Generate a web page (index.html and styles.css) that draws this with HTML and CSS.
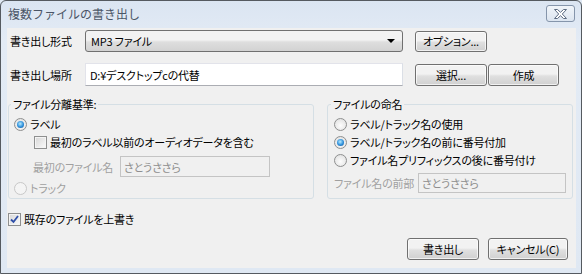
FILE: index.html
```html
<!DOCTYPE html>
<html lang="ja">
<head>
  <meta charset="UTF-8" />
  <title>複数ファイルの書き出し</title>
  <link rel="stylesheet" href="styles.css">
</head>
<body>
  <div class="window">
    <div class="titlebar">
      <span class="title">複数ファイルの書き出し</span>
      <button class="close" type="button">
        <svg width="13" height="10" viewBox="0 0 13 10">
          <path d="M0.5 0.5H3.5L6.5 3.3L9.5 0.5H12.5L8.3 5L12.5 9.5H9.5L6.5 6.7L3.5 9.5H0.5L4.7 5Z" fill="#fff" stroke="#5d6c82" stroke-width="1" stroke-linejoin="round"/>
        </svg>
      </button>
    </div>

    <div class="client">
      <div class="row row-format">
        <label class="field-label">書き出し形式</label>
        <div class="combo">
          <span>MP3 ファイル</span>
          <span class="arrow"></span>
        </div>
        <button class="btn btn-wide" type="button">オプション...</button>
      </div>

      <div class="row row-location">
        <label class="field-label">書き出し場所</label>
        <div class="textbox">D:¥デスクトップcの代替</div>
        <button class="btn btn-wide" type="button">選択...</button>
        <button class="btn btn-create" type="button">作成</button>
      </div>

      <div class="groups">
        <fieldset class="group group-split">
          <legend>ファイル分離基準:</legend>
          <div class="option">
            <span class="radio checked"></span>
            <span>ラベル</span>
          </div>
          <div class="option option-sub">
            <span class="checkbox"></span>
            <span>最初のラベル以前のオーディオデータを含む</span>
          </div>
          <div class="name-row name-row-split">
            <span class="disabled-text name-label">最初のファイル名</span>
            <div class="textbox textbox-disabled textbox-first">さとうささら</div>
          </div>
          <div class="option option-last">
            <span class="radio disabled"></span>
            <span class="disabled-text">トラック</span>
          </div>
        </fieldset>

        <fieldset class="group group-name">
          <legend>ファイルの命名</legend>
          <div class="option">
            <span class="radio"></span>
            <span>ラベル/トラック名の使用</span>
          </div>
          <div class="option option-next">
            <span class="radio checked"></span>
            <span>ラベル/トラック名の前に番号付加</span>
          </div>
          <div class="option option-next">
            <span class="radio"></span>
            <span>ファイル名プリフィックスの後に番号付け</span>
          </div>
          <div class="name-row name-row-prefix">
            <span class="disabled-text name-label-prefix">ファイル名の前部</span>
            <div class="textbox textbox-disabled textbox-prefix">さとうささら</div>
          </div>
        </fieldset>
      </div>

      <div class="option overwrite">
        <span class="checkbox checked">
          <svg width="9" height="9" viewBox="0 0 9 9">
            <path d="M1 4.5L3.5 7L8 1" fill="none" stroke="#2f4fa8" stroke-width="1.8"/>
          </svg>
        </span>
        <span>既存のファイルを上書き</span>
      </div>

      <div class="actions">
        <button class="btn btn-export" type="button">書き出し</button>
        <button class="btn btn-cancel" type="button">キャンセル(C)</button>
      </div>
    </div>
  </div>
</body>
</html>
```

FILE: styles.css
```css
body {
  margin: 0;
  font-family: "Noto Sans CJK JP", "Noto Sans", sans-serif;
  font-size: 11px;
  line-height: 14px;
  letter-spacing: -0.2px;
  font-feature-settings: "palt";
  color: #000;
  background: #dfe8f3;
}
.window {
  width: 582px;
  height: 274px;
  box-sizing: border-box;
  border: 1px solid #555a60;
  border-radius: 6px 6px 0 0;
  background: linear-gradient(#dbe5f2, #e3ebf5 40px, #dfe8f3);
  padding: 0 5px 5px 6px;
}
.titlebar {
  height: 27px;
  display: flex;
  justify-content: space-between;
  align-items: flex-start;
  padding-left: 1px;
}
.title {
  margin-top: 6px;
  color: #4a5566;
  font-size: 12px;
  letter-spacing: 0;
  font-feature-settings: normal;
}
.close {
  margin-top: 4px;
  margin-right: 1px;
  width: 29px;
  height: 17px;
  padding: 0;
  display: flex;
  align-items: center;
  justify-content: center;
  border: 1px solid #8595ab;
  border-radius: 3px;
  background: linear-gradient(#f1f5fa, #dce5f0);
}
.client {
  height: 240px;
  box-sizing: border-box;
  background: #f0f0f0;
  padding: 2px 3px 0 1px;
  white-space: nowrap;
}
.row {
  display: flex;
  align-items: center;
}
.row-format {
  height: 22px;
}
.row-location {
  height: 23px;
  margin-top: 11px;
}
.field-label {
  width: 77px;
  padding-left: 2px;
  box-sizing: border-box;
}
.combo {
  width: 318px;
  height: 22px;
  box-sizing: border-box;
  border: 1px solid #707070;
  border-radius: 3px;
  background: linear-gradient(#f2f2f2 45%, #dedede 55%, #d2d2d2);
  display: flex;
  align-items: center;
  justify-content: space-between;
  padding: 0 7px 0 5px;
  margin-right: 12px;
}
.arrow {
  width: 0;
  height: 0;
  border-left: 4px solid transparent;
  border-right: 4px solid transparent;
  border-top: 4px solid #000;
}
.textbox {
  width: 318px;
  height: 23px;
  box-sizing: border-box;
  border: 1px solid #abadb3;
  border-top-color: #e2e3ea;
  border-left-color: #e2e3ea;
  border-right-color: #dbdfe6;
  background: #fff;
  padding: 0 4px;
  display: flex;
  align-items: center;
  margin-right: 12px;
}
.textbox-disabled {
  background: #f0f0f0;
  border: 1px solid #c4c4c4;
  color: #8d8d8d;
  margin-right: 0;
  padding: 0 3px;
}
.textbox-first {
  width: 150px;
  height: 21px;
}
.textbox-prefix {
  width: 148px;
  height: 20px;
}
.btn {
  height: 22px;
  box-sizing: border-box;
  padding: 0;
  border: 1px solid #707070;
  border-radius: 3px;
  background: linear-gradient(#f2f2f2 45%, #e0e0e0 55%, #d0d0d0);
  font: inherit;
  letter-spacing: inherit;
  font-feature-settings: "palt";
  color: #000;
  box-shadow: inset 0 0 0 1px rgba(255, 255, 255, 0.7);
}
.btn-wide {
  width: 72px;
}
.row-format .btn-wide {
  height: 21px;
}
.btn-create {
  width: 71px;
  margin-left: 1px;
}
.groups {
  display: flex;
  gap: 13px;
  margin-top: 11px;
}
.group {
  margin: 0;
  min-width: 0;
  border: 1px solid #d5dfe5;
  border-radius: 3px;
  box-sizing: border-box;
  padding: 6px 4px 3px 5px;
}
.group legend {
  padding: 0 2px;
  margin-left: -3px;
  line-height: 14px;
}
.group-split {
  width: 306px;
}
.group-name {
  width: 246px;
  padding-left: 6px;
}
.option {
  display: flex;
  align-items: center;
  gap: 3px;
  height: 14px;
}
.option-sub {
  margin-top: 4px;
  padding-left: 20px;
}
.option-next {
  margin-top: 4px;
}
.option-last {
  margin-top: 4px;
}
.radio {
  width: 13px;
  height: 13px;
  box-sizing: border-box;
  border-radius: 50%;
  border: 1px solid #8e8f8f;
  background: radial-gradient(circle at 50% 60%, #fdfdfd, #dcdcdc);
  display: flex;
  align-items: center;
  justify-content: center;
}
.radio.checked::after {
  content: "";
  width: 7px;
  height: 7px;
  border-radius: 50%;
  background: radial-gradient(circle at 45% 40%, #b9ecff, #2d8fdb 55%, #0c4b8a);
}
.radio.disabled {
  border-color: #c8c8c8;
  background: #f4f4f4;
}
.checkbox {
  width: 13px;
  height: 13px;
  box-sizing: border-box;
  border: 1px solid #8e8f8f;
  background: linear-gradient(135deg, #d6d6d6, #fbfbfb);
  box-shadow: inset 0 0 0 1px #f4f4f4;
  display: flex;
  align-items: center;
  justify-content: center;
}
.checkbox svg {
  display: block;
}
.name-row {
  display: flex;
  align-items: center;
}
.name-row-split {
  margin-top: 7px;
  padding-left: 19px;
}
.name-row-prefix {
  margin-top: 6px;
}
.name-label {
  width: 87px;
}
.name-label-prefix {
  width: 84px;
}
.disabled-text {
  color: #a0a0a0;
}
.overwrite {
  margin-top: 13px;
}
.actions {
  display: flex;
  justify-content: flex-end;
  gap: 9px;
  margin-top: 12px;
  padding-right: 5px;
}
.btn-export {
  width: 72px;
}
.btn-cancel {
  width: 80px;
}
```
